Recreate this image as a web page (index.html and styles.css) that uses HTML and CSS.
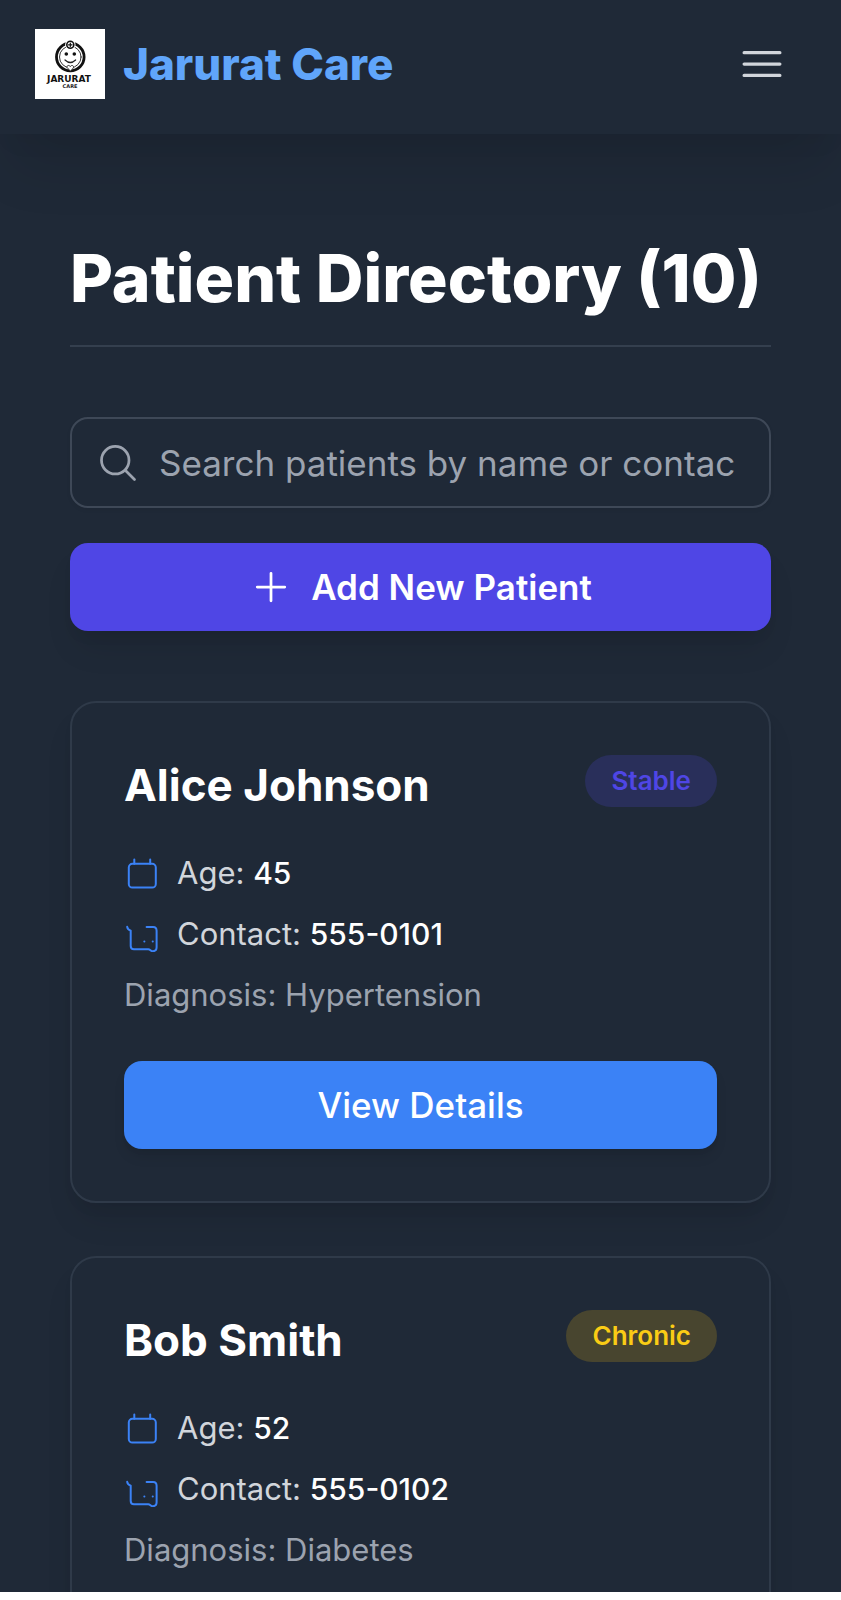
FILE: index.html
```html
<!DOCTYPE html>
<html lang="en">
<head>
<meta charset="utf-8">
<meta name="viewport" content="width=device-width, initial-scale=1">
<title>Jarurat Care</title>
<link rel="stylesheet" href="styles.css">
</head>
<body>
<svg class="sprite" aria-hidden="true">
  <symbol id="icon-age" viewBox="0 0 35 35">
    <rect x="4.800" y="7.800" width="27" height="23.800" rx="3.600"/>
    <path d="M10.300 3.600v4.200M26.200 3.600v4.200"/>
  </symbol>
  <symbol id="icon-contact" viewBox="0 0 35 35">
    <path d="M3.200 9.800c.2 2.200 1.200 3 3.500 3.800V29c0 2 1 3.200 3.200 3.200h14.500c1.600 0 2 2 4.300 2s3.900-1.300 3.900-3.900V13.700c0-2.400-1-3.700-3.400-3.700h-6.600"/>
    <path d="M20.300 24.400h.1M28.700 24.400h.1"/>
  </symbol>
</svg>
<div class="app">
  <header class="topbar">
    <a class="brand" href="#">
      <svg class="brand-logo" viewBox="0 0 70 70" role="img" aria-label="Jarurat Care logo">
        <rect width="70" height="70" fill="#fff"/>
        <circle cx="35.300" cy="28" r="13.800" fill="none" stroke="#111" stroke-width="2.800"/>
        <circle cx="35.300" cy="28" r="10.800" fill="none" stroke="#333" stroke-width="1"/>
        <circle cx="35.300" cy="15.800" r="5.200" fill="#fff"/>
        <circle cx="35.300" cy="15.800" r="3.500" fill="#fff" stroke="#111" stroke-width="1.600"/>
        <path d="M35.300 14v3.600M33.500 15.800h3.600" stroke="#111" stroke-width="1.200"/>
        <circle cx="31.300" cy="25" r="1.800" fill="#111"/>
        <circle cx="39.300" cy="25" r="1.800" fill="#111"/>
        <path d="M30 31q5.300 5 10.600 0" fill="none" stroke="#222" stroke-width="1.200"/>
        <path d="M35.300 42l-3.200-3.500c-.8-2 2.200-3 3.200-.9 1-2.100 4-1.100 3.200.9z" fill="#fff" stroke="#222" stroke-width=".9"/>
        <text class="logo-name" x="34" y="53" text-anchor="middle">JARURAT</text>
        <text class="logo-sub" x="35" y="59" text-anchor="middle">CARE</text>
      </svg>
      <span class="brand-name">Jarurat Care</span>
    </a>
    <button class="menu-button" type="button" aria-label="Open menu">
      <svg class="icon-menu" viewBox="0 0 24 24"><path d="M3.750 6.750h16.500M3.750 12h16.500M3.750 17.250h16.500"/></svg>
    </button>
  </header>

  <main class="content">
    <h1 class="page-title">Patient Directory (10)</h1>
    <div class="toolbar">
      <label class="search">
        <svg class="icon-search" viewBox="0 0 24 24"><path d="M21 21l-5.197-5.197m0 0A7.500 7.500 0 1 0 5.196 5.196a7.500 7.500 0 0 0 10.607 10.607z"/></svg>
        <input class="search-input" type="text" aria-label="Search patients" placeholder="Search patients by name or contact...">
      </label>
      <button class="button button-add" type="button">
        <svg class="icon-plus" viewBox="0 0 24 24"><path d="M12 4.500v15m7.500-7.500h-15"/></svg>
        Add New Patient
      </button>
    </div>

    <div class="cards">
      <article class="card">
        <div class="card-head">
          <h2 class="card-name">Alice Johnson</h2>
          <span class="badge badge-stable">Stable</span>
        </div>
        <div class="facts">
          <p class="fact"><svg class="icon-fact"><use href="#icon-age"/></svg><span>Age: <strong>45</strong></span></p>
          <p class="fact"><svg class="icon-fact"><use href="#icon-contact"/></svg><span>Contact: <strong>555-0101</strong></span></p>
          <p class="fact fact-muted">Diagnosis: Hypertension</p>
        </div>
        <button class="button button-view" type="button">View Details</button>
      </article>

      <article class="card">
        <div class="card-head">
          <h2 class="card-name">Bob Smith</h2>
          <span class="badge badge-chronic">Chronic</span>
        </div>
        <div class="facts">
          <p class="fact"><svg class="icon-fact"><use href="#icon-age"/></svg><span>Age: <strong>52</strong></span></p>
          <p class="fact"><svg class="icon-fact"><use href="#icon-contact"/></svg><span>Contact: <strong>555-0102</strong></span></p>
          <p class="fact fact-muted">Diagnosis: Diabetes</p>
        </div>
        <button class="button button-view" type="button">View Details</button>
      </article>
    </div>
  </main>
</div>
</body>
</html>
```

FILE: styles.css
```css
*,
*::before,
*::after {
  box-sizing: border-box;
}

body {
  margin: 0;
  background: #fff;
  font-family: Inter, "Liberation Sans", sans-serif;
  font-size: 35px;
  color: #fff;
}

h1,
h2,
p {
  margin: 0;
}

button,
input {
  font: inherit;
  color: inherit;
}

button {
  border: 0;
  cursor: pointer;
}

svg {
  display: block;
  flex: none;
  fill: none;
  stroke-linecap: round;
  stroke-linejoin: round;
}

.sprite {
  display: none;
}

.app {
  height: calc(100vh - 8px);
  overflow: hidden;
  background: #1f2937;
}

.topbar {
  display: flex;
  align-items: center;
  justify-content: space-between;
  padding: 20px 35px 26px;
  background: #1f2937;
  box-shadow: 0 44px 55px -11px rgba(0, 0, 0, 0.1), 0 18px 22px -11px rgba(0, 0, 0, 0.05);
}

.brand {
  display: flex;
  align-items: center;
  gap: 18px;
  color: #60a5fa;
  text-decoration: none;
}

.brand-logo {
  width: 70px;
  height: 70px;
}

.logo-name {
  font-family: "DejaVu Sans", sans-serif;
  font-size: 9px;
  font-weight: 700;
  fill: #111;
}

.logo-sub {
  font-family: "DejaVu Sans", sans-serif;
  font-size: 5px;
  font-weight: 700;
  fill: #222;
}

.brand-name {
  font-size: 44px;
  font-weight: 800;
  line-height: 61px;
}

.menu-button {
  padding: 18px;
  background: none;
  color: #d1d5db;
}

.icon-menu {
  width: 52px;
  height: 52px;
  stroke: currentColor;
  stroke-width: 1.5;
}

.content {
  padding: 105px 70px 70px;
}

.page-title {
  padding-bottom: 27px;
  margin-bottom: 70px;
  border-bottom: 2px solid #343f4e;
  font-size: 66px;
  font-weight: 800;
  line-height: 79px;
}

.toolbar {
  display: flex;
  flex-direction: column;
  gap: 35px;
  margin-bottom: 70px;
}

.search {
  display: flex;
  align-items: center;
  gap: 19px;
  padding: 0 35px 0 24px;
  border: 2px solid #3e4857;
  border-radius: 18px;
  color: #9ca3af;
  box-shadow: 0 2px 4px rgba(0, 0, 0, 0.05);
}

.icon-search {
  width: 44px;
  height: 44px;
  stroke: currentColor;
  stroke-width: 1.5;
}

.search-input {
  flex: 1;
  min-width: 0;
  height: 87px;
  padding: 0;
  border: 0;
  outline: 0;
  background: none;
}

.search-input::placeholder {
  color: #9ca3af;
  opacity: 1;
}

.button {
  display: flex;
  align-items: center;
  justify-content: center;
  gap: 18px;
  width: 100%;
  padding: 18px 35px;
  border-radius: 18px;
  line-height: 52px;
}

.button-add {
  background: #4f46e5;
  font-weight: 600;
  box-shadow: 0 22px 33px -7px rgba(0, 0, 0, 0.1), 0 9px 13px -4px rgba(0, 0, 0, 0.05);
}

.icon-plus {
  width: 44px;
  height: 44px;
  stroke: currentColor;
  stroke-width: 1.5;
}

.cards {
  display: grid;
  gap: 53px;
}

.card {
  padding: 52px;
  border: 2px solid #2f3a49;
  border-radius: 26px;
  background: #1f2937;
  box-shadow: 0 22px 33px -7px rgba(0, 0, 0, 0.1), 0 9px 13px -4px rgba(0, 0, 0, 0.05);
}

.card-head {
  display: flex;
  align-items: flex-start;
  justify-content: space-between;
  margin-bottom: 35px;
}

.card-name {
  font-size: 44px;
  font-weight: 700;
  line-height: 61px;
}

.badge {
  padding: 9px 26px;
  border-radius: 26px;
  font-size: 26px;
  font-weight: 600;
  line-height: 34px;
}

.badge-stable {
  background: #292f5a;
  color: #4f46e5;
}

.badge-chronic {
  background: #48452f;
  color: #facc15;
}

.facts {
  display: grid;
  gap: 17px;
  margin-bottom: 44px;
}

.fact {
  display: flex;
  align-items: center;
  gap: 18px;
  font-size: 31px;
  line-height: 44px;
  color: #d1d5db;
}

.fact strong {
  font-size: 30px;
  font-weight: 500;
  color: #fff;
}

.fact-muted {
  color: #9ca3af;
}

.icon-fact {
  width: 35px;
  height: 35px;
  overflow: visible;
  stroke: #3b82f6;
  stroke-width: 2;
}

.button-view {
  background: #3b82f6;
  font-weight: 500;
  box-shadow: 0 9px 13px -2px rgba(0, 0, 0, 0.1), 0 4px 9px -4px rgba(0, 0, 0, 0.06);
}
```
